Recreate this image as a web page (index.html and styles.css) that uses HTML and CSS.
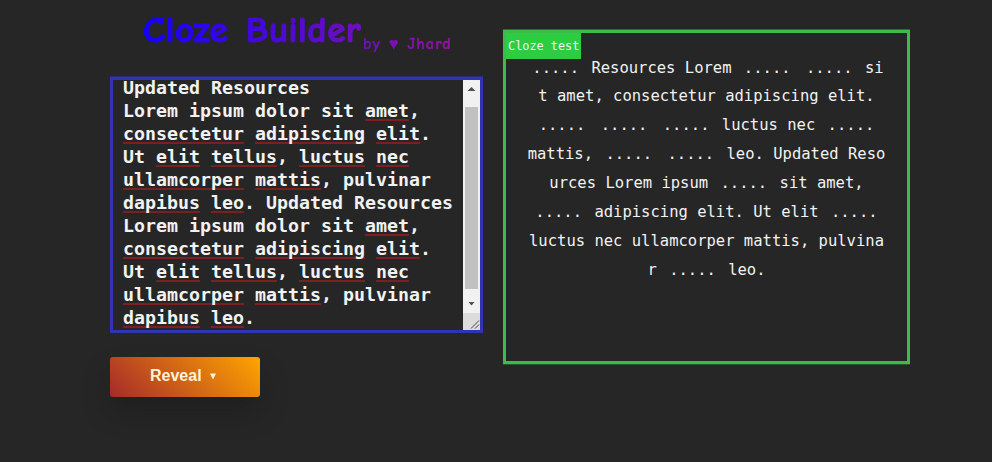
FILE: index.html
```html
<!DOCTYPE html>
<html lang="en">
<head>
<meta charset="utf-8">
<title>Cloze Builder</title>
<link rel="stylesheet" href="styles.css">
</head>
<body>
<main class="app">
  <section class="editor">
    <h1 class="title"><span class="gradient"><span class="name">Cloze Builder</span><span class="author">by ♥ Jhard</span></span></h1>
    <div class="source">
      <div class="source-text">Updated Resources
Lorem ipsum dolor sit <u>amet</u>,
<u>consectetur</u> <u>adipiscing</u> <u>elit</u>.
Ut <u>elit</u> <u>tellus</u>, <u>luctus</u> <u>nec</u>
<u>ullamcorper</u> <u>mattis</u>, pulvinar
<u>dapibus</u> <u>leo</u>. Updated Resources
Lorem ipsum dolor sit <u>amet</u>,
<u>consectetur</u> <u>adipiscing</u> <u>elit</u>.
Ut <u>elit</u> <u>tellus</u>, <u>luctus</u> <u>nec</u>
<u>ullamcorper</u> <u>mattis</u>, pulvinar
<u>dapibus</u> <u>leo</u>.</div>
      <div class="scrollbar">
        <svg class="arrow up" viewBox="0 0 17 17"><path d="M4.500 11h8L8.500 7z"/></svg>
        <div class="thumb"></div>
        <svg class="arrow down" viewBox="0 0 17 17"><path d="M5.500 6h6L8.500 9.500z"/></svg>
        <svg class="resizer" viewBox="0 0 17 17"><path d="M8 15.500l8-8M12 15.500l4-4"/></svg>
      </div>
    </div>
    <button class="reveal">Reveal <svg class="caret" viewBox="0 0 6 7"><path d="M0 .5h6L3 6.500z"/></svg></button>
  </section>
  <section class="output">
    <div class="label">Cloze test</div>
    <div class="cloze"><b>.....</b> Resources Lorem <b>.....</b> <b>.....</b> si
t amet, consectetur adipiscing elit.
<b>.....</b> <b>.....</b> <b>.....</b> luctus nec <b>.....</b>
mattis, <b>.....</b> <b>.....</b> leo. Updated Reso
urces Lorem ipsum <b>.....</b> sit amet,
<b>.....</b> adipiscing elit. Ut elit <b>.....</b>
luctus nec ullamcorper mattis, pulvina
r <b>.....</b> leo.</div>
  </section>
</main>
</body>
</html>
```
FILE: styles.css
```css
* { box-sizing: border-box; }
body {
  margin: 0;
  height: 462px;
  overflow: hidden;
  background: #262626;
  color: #f2f2f2;
}
.app {
  display: grid;
  grid-template-columns: 373px 407px;
  column-gap: 20px;
  padding-left: 110px;
  align-items: start;
}
.editor { display: flex; flex-direction: column; }
.title {
  margin: 0;
  height: 77px;
  padding: 4px 0 0 33px;
  font-family: "Comic Sans MS", "Comic Neue", "Open Sans", sans-serif;
  font-weight: 600;
  line-height: 52px;
  white-space: nowrap;
}
.gradient {
  display: inline-flex;
  width: 309px;
  background: linear-gradient(90deg, #1400ff, #9415a0);
  -webkit-background-clip: text;
  background-clip: text;
  color: transparent;
}
.name {
  width: 220px;
  font-size: 37px;
  letter-spacing: .5px;
  word-spacing: 4px;
  -webkit-text-stroke: 1.2px transparent;
}
.author {
  padding-top: 14px;
  font-size: 16px;
  line-height: 52px;
  letter-spacing: 1.2px;
  word-spacing: 1px;
  -webkit-text-stroke: .4px transparent;
}
.source {
  display: flex;
  height: 256px;
  border: 3px solid #3232b4;
  box-shadow: 0 -1px 0 #2d2c73;
}
.source-text {
  flex: 1;
  padding-left: 10px;
  margin-top: -4px;
  font: bold 18.27px/23px "DejaVu Sans Mono", monospace;
  white-space: pre;
}
.source-text u {
  text-decoration: underline solid #7d1e21 2px;
  text-underline-offset: 2px;
  text-decoration-skip-ink: none;
}
.scrollbar {
  display: flex;
  flex-direction: column;
  width: 17px;
  background: #f1f1f1;
}
.arrow { width: 17px; fill: #505050; }
.up { height: 17px; margin-bottom: 10px; }
.down { height: 17px; margin: 7px 0 0; }
.thumb { width: 13px; height: 182px; margin-left: 2px; background: #c1c1c1; }
.resizer { width: 17px; height: 17px; background: #dcdcdc; stroke: #444; fill: none; }
.reveal {
  display: flex;
  align-items: center;
  width: 150px;
  height: 40px;
  margin-top: 24px;
  padding: 0 0 2px 40px;
  border: 0;
  border-radius: 3px;
  background: linear-gradient(45deg, #a52a2a, #ffa500);
  box-shadow: 0 15px 30px rgba(0, 0, 0, .2);
  color: #fff3d6;
  font: bold 16px "Liberation Sans", Arial, sans-serif;
}
.caret { width: 6px; height: 7px; margin-left: 8px; fill: #fff3d6; }
.output {
  height: 334px;
  margin-top: 30px;
  border: 3px solid #3cbd4b;
  box-shadow: 0 -1px 0 #2a6d32, 0 1px 0 #29542d;
}
.label {
  width: 75px;
  height: 26px;
  padding-left: 2px;
  background: #2ecc40;
  font: 11.87px/27px "DejaVu Sans Mono", monospace;
  white-space: nowrap;
}
.cloze {
  margin-top: -5.5px;
  text-align: center;
  font: 15.53px/28.9px "DejaVu Sans Mono", monospace;
  white-space: pre;
}
.cloze b { padding: 0 3px; font-weight: normal; }
```
